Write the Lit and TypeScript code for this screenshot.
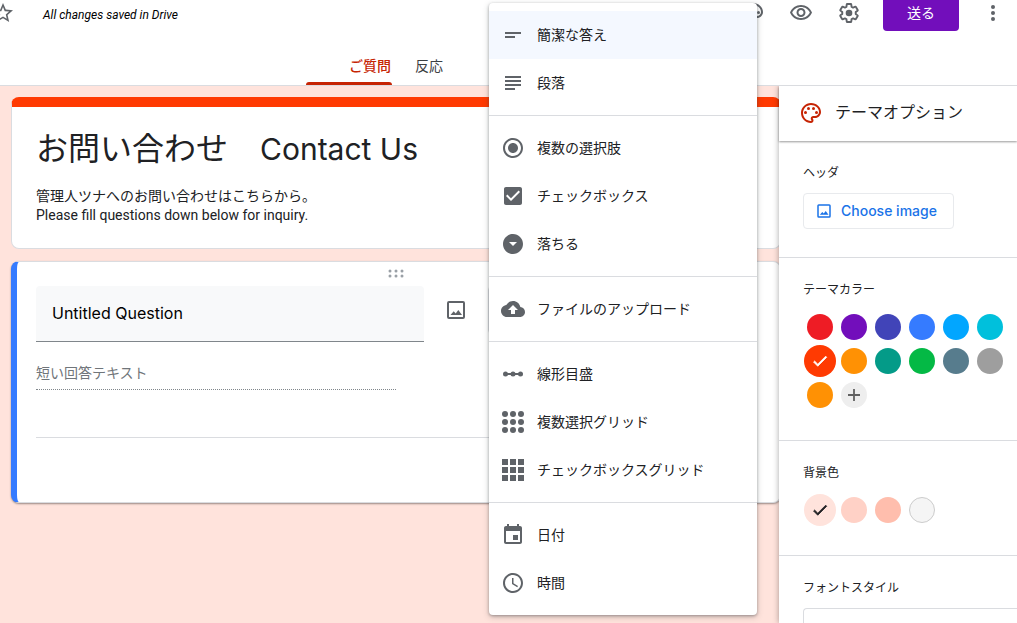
import { LitElement, html, css, svg } from "lit";
import { customElement, property, state } from "lit/decorators.js";
import { classMap } from "lit/directives/class-map.js";
import { styleMap } from "lit/directives/style-map.js";

const GRID = [4, 12, 20];

const ICONS: Record<string, unknown> = {
  star: svg`<path d="M22 9.24l-7.19-.62L12 2 9.19 8.63 2 9.24l5.46 4.73L5.82 21 12 17.27 18.18 21l-1.63-7.03L22 9.24zM12 15.4l-3.76 2.27 1-4.28-3.32-2.88 4.38-.38L12 6.1l1.71 4.04 4.38.38-3.32 2.88 1 4.28L12 15.4z"/>`,
  palette: svg`<path d="M12 22C6.49 22 2 17.51 2 12S6.49 2 12 2s10 4.04 10 9c0 3.31-2.69 6-6 6h-1.77c-.28 0-.5.22-.5.5 0 .12.05.23.13.33.41.47.64 1.06.64 1.67 0 1.38-1.12 2.5-2.5 2.5zm0-18c-4.41 0-8 3.59-8 8s3.59 8 8 8c.28 0 .5-.22.5-.5 0-.16-.08-.28-.14-.35-.41-.46-.63-1.05-.63-1.65 0-1.38 1.12-2.5 2.5-2.5H16c2.21 0 4-1.79 4-4 0-3.86-3.59-7-8-7z"/><circle cx="6.5" cy="11.5" r="1.5"/><circle cx="9.5" cy="7.5" r="1.5"/><circle cx="14.5" cy="7.5" r="1.5"/><circle cx="17.5" cy="11.5" r="1.5"/>`,
  eye: svg`<path d="M12 6c3.79 0 7.17 2.13 8.82 5.5C19.17 14.87 15.79 17 12 17s-7.17-2.13-8.82-5.5C4.83 8.13 8.21 6 12 6m0-2C7 4 2.73 7.11 1 11.5 2.73 15.89 7 19 12 19s9.27-3.11 11-7.5C21.27 7.11 17 4 12 4zm0 5c1.38 0 2.5 1.12 2.5 2.5S13.38 14 12 14s-2.5-1.12-2.5-2.5S10.62 9 12 9m0-2c-2.48 0-4.5 2.02-4.5 4.5S9.52 16 12 16s4.5-2.02 4.5-4.5S14.48 7 12 7z"/>`,
  gear: svg`<g transform="translate(1.2 1.2) scale(.9)"><path fill="none" stroke="currentColor" stroke-width="2.1" stroke-linejoin="round" d="M19.43 12.98c.04-.32.07-.64.07-.98 0-.34-.03-.66-.07-.98l2.11-1.65c.19-.15.24-.42.12-.64l-2-3.46c-.09-.16-.26-.25-.44-.25-.06 0-.12.01-.17.03l-2.49 1c-.52-.4-1.08-.73-1.69-.98l-.38-2.65C14.46 2.18 14.25 2 14 2h-4c-.25 0-.46.18-.49.42l-.38 2.65c-.61.25-1.17.59-1.69.98l-2.49-1c-.06-.02-.12-.03-.18-.03-.17 0-.34.09-.43.25l-2 3.46c-.13.22-.07.49.12.64l2.11 1.65c-.04.32-.07.65-.07.98 0 .33.03.66.07.98l-2.11 1.65c-.19.15-.24.42-.12.64l2 3.46c.09.16.26.25.44.25.06 0 .12-.01.17-.03l2.49-1c.52.4 1.08.73 1.69.98l.38 2.65c.03.24.24.42.49.42h4c.25 0 .46-.18.49-.42l.38-2.65c.61-.25 1.17-.59 1.69-.98l2.49 1c.06.02.12.03.18.03.17 0 .34-.09.43-.25l2-3.46c.12-.22.07-.49-.12-.64l-2.11-1.65z"/><circle cx="12" cy="12" r="3.7"/></g>`,
  more: svg`<circle cx="12" cy="6" r="2"/><circle cx="12" cy="12" r="2"/><circle cx="12" cy="18" r="2"/>`,
  image: svg`<path fill-rule="evenodd" d="M5 3h14a2 2 0 0 1 2 2v14a2 2 0 0 1-2 2H5a2 2 0 0 1-2-2V5a2 2 0 0 1 2-2zm0 2v14h14V5z"/><path d="M6.5 17h11.500l-3.700-5-2.600 3.400-2-2.200z"/>`,
  drag: svg`${[9, 14].map((y) => [6, 12, 18].map((x) => svg`<circle cx=${x} cy=${y} r="1.500"/>`))}`,
  short: svg`<path d="M4 9h16v2H4zM4 13h10v2H4z"/>`,
  paragraph: svg`<path d="M4 5h16v2H4zM4 9h16v2H4zM4 13h16v2H4zM4 17h10v2H4z"/>`,
  radio: svg`<path d="M12 7c-2.76 0-5 2.24-5 5s2.24 5 5 5 5-2.24 5-5-2.24-5-5-5zm0-5C6.48 2 2 6.48 2 12s4.480 10 10 10 10-4.480 10-10S17.520 2 12 2zm0 18c-4.420 0-8-3.580-8-8s3.580-8 8-8 8 3.580 8 8-3.580 8-8 8z"/>`,
  checkbox: svg`<path d="M19 3H5c-1.110 0-2 .9-2 2v14c0 1.100.890 2 2 2h14c1.110 0 2-.9 2-2V5c0-1.100-.890-2-2-2zm-9 14l-5-5 1.410-1.410L10 14.170l7.590-7.590L19 8l-9 9z"/>`,
  dropdown: svg`<path d="M12 2C6.480 2 2 6.480 2 12s4.480 10 10 10 10-4.480 10-10S17.520 2 12 2zm0 12l-4-4h8l-4 4z"/>`,
  upload: svg`<path d="M19.350 10.040C18.670 6.590 15.640 4 12 4 9.110 4 6.600 5.640 5.350 8.040 2.340 8.360 0 10.910 0 14c0 3.310 2.690 6 6 6h13c2.760 0 5-2.240 5-5 0-2.640-2.050-4.780-4.650-4.960zM14 13v4h-4v-4H7l5-5 5 5h-3z"/>`,
  linear: svg`<path d="M4 11h16v2H4z"/><circle cx="4.500" cy="12" r="2.500"/><circle cx="12" cy="12" r="2.500"/><circle cx="19.500" cy="12" r="2.500"/>`,
  dotGrid: svg`${GRID.map((y) => GRID.map((x) => svg`<circle cx=${x} cy=${y} r="3"/>`))}`,
  squareGrid: svg`${GRID.map((y) => GRID.map((x) => svg`<rect x=${x - 3} y=${y - 3} width="6" height="6"/>`))}`,
  date: svg`<path d="M17 12h-5v5h5v-5zM16 1v2H8V1H6v2H5c-1.110 0-1.990.9-1.990 2L3 19c0 1.100.890 2 2 2h14c1.100 0 2-.9 2-2V5c0-1.100-.9-2-2-2h-1V1h-2zm3 18H5V8h14v11z"/>`,
  time: svg`<path d="M11.990 2C6.470 2 2 6.480 2 12s4.470 10 9.990 10C17.520 22 22 17.520 22 12S17.520 2 11.990 2zM12 20c-4.420 0-8-3.580-8-8s3.580-8 8-8 8 3.580 8 8-3.580 8-8 8zm.5-13H11v6l5.250 3.150.750-1.230-4.500-2.670z"/>`,
  check: svg`<path d="M9 16.170L4.830 12l-1.420 1.410L9 19 21 7l-1.410-1.410z" stroke="currentColor"/>`,
  plus: svg`<path d="M20 13.200h-6.800V20h-2.400v-6.800H4v-2.400h6.800V4h2.400v6.800H20z"/>`,
};

@customElement("form-icon")
class FormIcon extends LitElement {
  @property() name = "";
  @property({ type: Number }) size = 24;

  static styles = css`
    :host {
      display: inline-flex;
      flex: none;
    }
    svg {
      display: block;
      fill: currentColor;
    }
  `;

  render() {
    return html`<svg width=${this.size} height=${this.size} viewBox="0 0 24 24" aria-hidden="true">${ICONS[this.name]}</svg>`;
  }
}

@customElement("type-menu")
class TypeMenu extends LitElement {
  @state() private selected = "short";

  private groups = [
    [["short", "簡潔な答え"], ["paragraph", "段落"]],
    [["radio", "複数の選択肢"], ["checkbox", "チェックボックス"], ["dropdown", "落ちる"]],
    [["upload", "ファイルのアップロード"]],
    [["linear", "線形目盛"], ["dotGrid", "複数選択グリッド"], ["squareGrid", "チェックボックスグリッド"]],
    [["date", "日付"], ["time", "時間"]],
  ];

  static styles = css`
    :host {
      display: block;
      background: #fff;
      border-radius: 4px;
      box-shadow: 0 1px 3px rgba(60, 64, 67, 0.4), 0 2px 6px rgba(60, 64, 67, 0.25);
    }
    .group {
      padding: 8px 0;
    }
    .group + .group {
      border-top: 1px solid #dadce0;
    }
    .item {
      display: flex;
      align-items: center;
      gap: 12px;
      width: 100%;
      height: 48px;
      padding: 0 12px;
      border: 0;
      background: none;
      color: #202124;
      font: 14px/20px Roboto, "Noto Sans CJK JP", sans-serif;
      text-align: left;
      cursor: pointer;
    }
    .item form-icon {
      color: #5f6368;
    }
    .selected {
      background: #f4f8ff;
    }
  `;

  render() {
    return html`<div role="menu">
      ${this.groups.map(
        (group) => html`<div class="group" role="group">
          ${group.map(
            ([id, label]) => html`<button
              class=${classMap({ item: true, selected: id === this.selected })}
              role="menuitemradio"
              aria-checked=${id === this.selected}
              @click=${() => (this.selected = id)}
            ><form-icon name=${id}></form-icon>${label}</button>`
          )}
        </div>`
      )}
    </div>`;
  }
}

@customElement("color-swatches")
class ColorSwatches extends LitElement {
  @property() label = "";
  @property({ attribute: false }) colors: string[] = [];
  @property({ type: Number }) selected = 0;
  @property({ type: Boolean }) dark = false;
  @property({ type: Boolean }) addable = false;

  static styles = css`
    .swatches {
      display: grid;
      grid-template-columns: repeat(6, 34px);
      grid-auto-rows: 34px;
      margin: 0;
      padding: 0;
      border: 0;
    }
    .swatch {
      display: grid;
      place-items: center;
      cursor: pointer;
    }
    .swatch > * {
      grid-area: 1 / 1;
    }
    .dot {
      appearance: none;
      box-sizing: border-box;
      width: 26px;
      height: 26px;
      margin: 0;
      border-radius: 50%;
    }
    .dot:checked {
      width: 32px;
      height: 32px;
    }
    .outlined {
      border: 1px solid #ccc;
    }
    .mark {
      color: #fff;
      pointer-events: none;
    }
    .dark {
      color: #202124;
    }
    .add {
      display: grid;
      place-items: center;
      place-self: center;
      width: 26px;
      height: 26px;
      padding: 0;
      border: 0;
      border-radius: 50%;
      background: #eee;
      color: #616161;
    }
  `;

  render() {
    return html`<fieldset class="swatches" aria-label=${this.label}>
      ${this.colors.map(
        (color, i) => html`<label class="swatch">
          <input
            class=${classMap({ dot: true, outlined: color === "#f5f5f5" })}
            type="radio"
            name="color"
            aria-label=${color}
            style=${styleMap({ background: color })}
            .checked=${i === this.selected}
            @change=${() => (this.selected = i)}
          />
          ${i === this.selected
            ? html`<form-icon class=${classMap({ mark: true, dark: this.dark })} name="check" size="18"></form-icon>`
            : ""}
        </label>`
      )}
      ${this.addable ? html`<button class="add" aria-label="+"><form-icon name="plus" size="18"></form-icon></button>` : ""}
    </fieldset>`;
  }
}

@customElement("app-root")
class AppRoot extends LitElement {
  private themeColors = [
    "#ee1c25", "#720ebb", "#4144b8", "#357bff", "#02a6ff", "#00c0dc",
    "#ff3a02", "#ff9104", "#049b88", "#04b945", "#577c8d", "#9e9e9e",
    "#ff9104",
  ];
  private backgrounds = ["#ffe3dc", "#ffd1c6", "#ffbead", "#f5f5f5"];

  static styles = css`
    :host {
      display: flex;
      flex-direction: column;
      position: relative;
      height: 100vh;
      overflow: hidden;
      background: #fff;
      color: #202124;
      font: 14px/20px Roboto, "Noto Sans CJK JP", sans-serif;
    }
    * {
      box-sizing: border-box;
    }
    button {
      font: inherit;
      cursor: pointer;
    }
    .header {
      display: flex;
      flex: none;
      flex-direction: column;
      justify-content: space-between;
      height: 86px;
      border-bottom: 1px solid #dadce0;
    }
    .toolbar {
      display: flex;
      align-items: center;
      gap: 24px;
      height: 36px;
      margin: -5px 12px 0 -9px;
    }
    .icon-button {
      display: inline-flex;
      flex: none;
      padding: 0;
      border: 0;
      background: none;
      color: #5f6368;
    }
    .saved {
      flex: 1;
      padding: 4px 0 0 4px;
      color: #000;
      font-size: 12px;
      font-style: italic;
    }
    .send {
      height: 36px;
      width: 76px;
      margin: 0 -2px 0 -2px;
      padding: 0;
      border: 0;
      border-radius: 4px;
      background: #720ebb;
      color: #fff;
    }
    .tabs {
      display: flex;
      align-self: center;
      gap: 23px;
      width: 405px;
    }
    .tab {
      height: 29px;
      color: #3c4043;
      text-decoration: none;
    }
    .current {
      position: relative;
      width: 86px;
      padding-right: 1px;
      color: #c62404;
      font-weight: 500;
      text-align: right;
    }
    .current::after {
      content: "";
      position: absolute;
      inset: auto 0 0;
      height: 3px;
      border-radius: 3px 3px 0 0;
      background: #c62404;
    }
    .main {
      display: flex;
      flex: 1;
      min-height: 0;
      background: #ffe3dc;
    }
    .canvas {
      display: flex;
      flex: 1;
      flex-direction: column;
      gap: 12px;
      min-width: 0;
      margin-right: -2px;
      padding: 11px 0 0 11px;
    }
    .card {
      border: 1px solid #dadce0;
      border-radius: 8px;
      background: #fff;
    }
    .intro {
      padding: 0 24px 23px;
      border-top: 10px solid #ff3a02;
    }
    .title {
      margin: 17px 0 0;
      font: 400 32px/44px "Noto Sans CJK JP", sans-serif;
    }
    .latin {
      font-family: Inter, sans-serif;
      font-size: 30px;
      line-height: 32px;
    }
    .about {
      margin: 19px 0 0;
      line-height: 19px;
    }
    .question {
      display: flex;
      flex-direction: column;
      height: 242px;
      padding: 0 24px 0 19px;
      border-left: 6px solid #357bff;
      box-shadow: 0 1px 2px rgba(0, 0, 0, 0.4);
    }
    .drag {
      align-self: center;
      height: 24px;
      color: #9aa0a6;
    }
    .row {
      display: flex;
      align-items: flex-start;
      gap: 20px;
    }
    .prompt {
      flex: 0 1 388px;
      min-width: 0;
      height: 56px;
      padding: 0 16px 2px;
      border: 0;
      border-bottom: 1px solid #80868b;
      border-radius: 4px 4px 0 0;
      background: #f8f9fa;
      color: #000;
      font: 16px/24px Inter, sans-serif;
    }
    .row .icon-button {
      margin-top: 12px;
    }
    .kind {
      flex: 1;
      min-width: 0;
      height: 48px;
      border: 1px solid #dadce0;
      border-radius: 4px;
      background: #fff;
      font: inherit;
    }
    .answer {
      width: 360px;
      height: 48px;
      padding: 21px 0 6px;
      border-bottom: 1px dotted #80868b;
      color: #70757a;
    }
    .rule {
      width: 100%;
      margin: 47px 0 0;
      border: 0;
      border-top: 1px solid #dadce0;
    }
    .panel {
      position: relative;
      flex: none;
      width: 238px;
      background: #fff;
      box-shadow: 0 0 6px rgba(0, 0, 0, 0.35);
      clip-path: inset(0 0 0 -10px);
    }
    .panel-title {
      display: flex;
      align-items: center;
      gap: 12px;
      height: 55px;
      margin: 0;
      padding: 0 20px 2px;
      box-shadow: 0 1px 2px rgba(0, 0, 0, 0.4);
      font-size: 16px;
      font-weight: 400;
    }
    .panel-title form-icon {
      color: #c62404;
    }
    .section {
      padding: 22px 0 28px 24px;
    }
    .section + .section {
      border-top: 1px solid #dadce0;
    }
    .label {
      display: block;
      margin: 0 0 10px;
      font-size: 12px;
      font-weight: 400;
      line-height: 20px;
    }
    .choose {
      display: flex;
      align-items: center;
      gap: 8px;
      height: 36px;
      padding: 0 16px 0 11px;
      border: 1px solid #e8eaed;
      border-radius: 4px;
      background: #fff;
      color: #1a73e8;
      font: 500 14px/20px Inter, sans-serif;
    }
    .font-select {
      width: 100%;
      height: 48px;
      border: 1px solid #dadce0;
      border-radius: 4px 0 0 4px;
      border-right: 0;
      background: #fff;
      font: inherit;
    }
    .menu {
      position: absolute;
      top: 3px;
      right: 260px;
      width: 268px;
    }
  `;

  render() {
    return html`
      <header class="header">
        <div class="toolbar">
          <button class="icon-button" aria-label="Star"><form-icon name="star"></form-icon></button>
          <span class="saved">All changes saved in Drive</span>
          <button class="icon-button" aria-label="Theme"><form-icon name="palette"></form-icon></button>
          <button class="icon-button" aria-label="Preview"><form-icon name="eye"></form-icon></button>
          <button class="icon-button" aria-label="Settings"><form-icon name="gear"></form-icon></button>
          <button class="send">送る</button>
          <button class="icon-button" aria-label="More"><form-icon name="more"></form-icon></button>
        </div>
        <nav class="tabs">
          <a class="tab current" href="#questions">ご質問</a>
          <a class="tab" href="#responses">反応</a>
        </nav>
      </header>
      <div class="main">
        <main class="canvas">
          <section class="card intro">
            <h1 class="title">お問い合わせ　<span class="latin">Contact Us</span></h1>
            <p class="about">管理人ツナへのお問い合わせはこちらから。<br />Please fill questions down below for inquiry.</p>
          </section>
          <section class="card question">
            <form-icon class="drag" name="drag"></form-icon>
            <div class="row">
              <input class="prompt" aria-label="Question" .value=${"Untitled Question"} />
              <button class="icon-button" aria-label="Add image"><form-icon name="image"></form-icon></button>
              <select class="kind" aria-label="Question type"><option>簡潔な答え</option></select>
            </div>
            <div class="answer">短い回答テキスト</div>
            <hr class="rule" />
          </section>
        </main>
        <aside class="panel">
          <h2 class="panel-title"><form-icon name="palette"></form-icon>テーマオプション</h2>
          <section class="section">
            <h3 class="label">ヘッダ</h3>
            <button class="choose"><form-icon name="image" size="18"></form-icon>Choose image</button>
          </section>
          <section class="section">
            <h3 class="label">テーマカラー</h3>
            <color-swatches label="テーマカラー" .colors=${this.themeColors} .selected=${6} addable></color-swatches>
          </section>
          <section class="section">
            <h3 class="label">背景色</h3>
            <color-swatches label="背景色" .colors=${this.backgrounds} .selected=${0} dark></color-swatches>
          </section>
          <section class="section">
            <label class="label" for="font-style">フォントスタイル</label>
            <select class="font-select" id="font-style"></select>
          </section>
        </aside>
      </div>
      <type-menu class="menu"></type-menu>
    `;
  }
}
